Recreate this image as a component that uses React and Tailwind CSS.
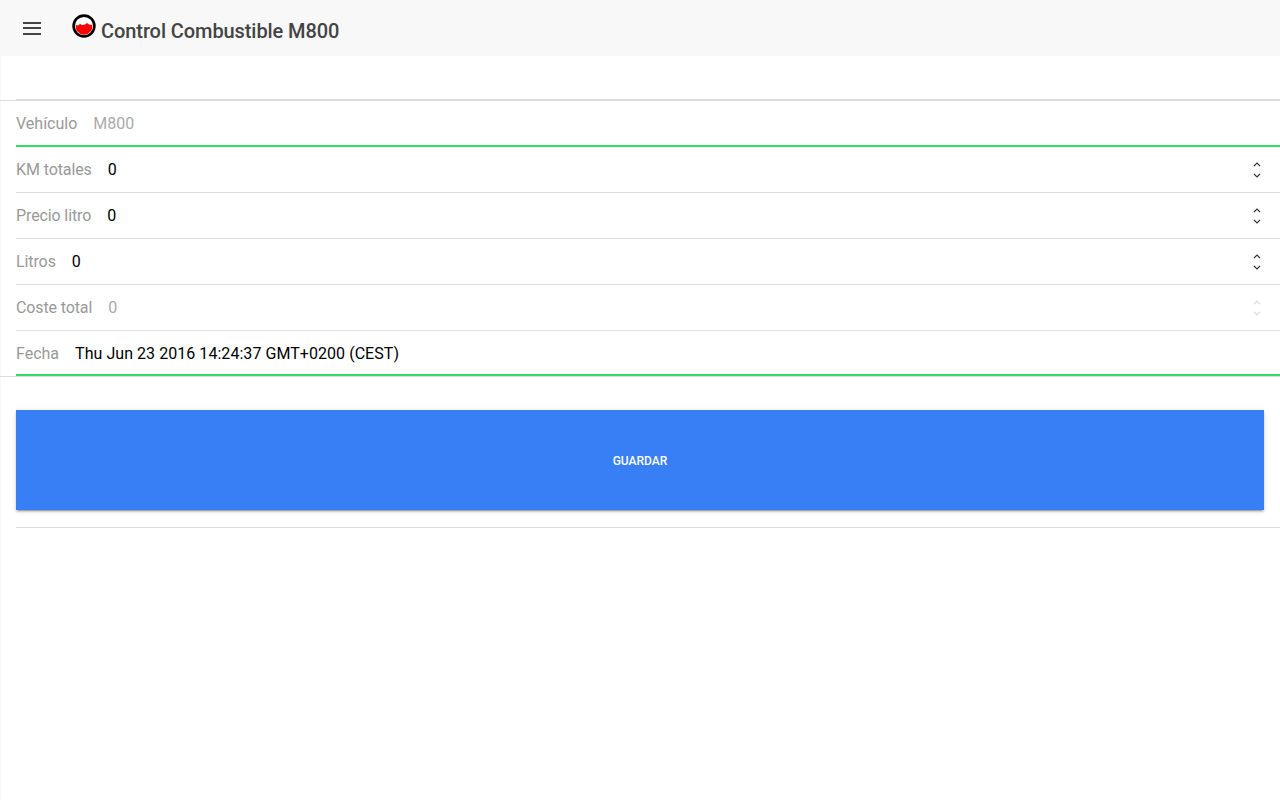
const rows = [
  { label: "KM totales", value: "0", labelClass: "tracking-[-0.1px]" },
  { label: "Precio litro", value: "0", labelClass: "tracking-[-0.12px]" },
  { label: "Litros", value: "0", labelClass: "tracking-[-0.1px]" },
  { label: "Coste total", value: "0", labelClass: "tracking-[-0.12px]", disabled: true },
];

function Spinner({ disabled }) {
  return (
    <svg width="8" height="16" viewBox="0 0 8 16" fill="none" className={disabled ? "opacity-15" : "opacity-90"}>
      <path d="M1 4 4 1l3 3M1 12l3 3 3-3" stroke="#222" strokeWidth="1.2" />
    </svg>
  );
}

function Logo() {
  return (
    <svg width="24" height="24" viewBox="0 0 24 24" className="mb-[4px]">
      <circle cx="12" cy="12" r="10.4" fill="#fff" stroke="#000" strokeWidth="2.6" />
      <path d="M3.7 11 6 11.5 8 10l2 1 3-.5L15 9l2 1.5 3.3.5a8.4 8.4 0 1 1-16.6 0z" fill="#f00" />
    </svg>
  );
}

function Row({ label, value, labelClass, disabled }) {
  return (
    <div className="ml-[16px] flex h-[46px] items-center border-b border-[#dddddd] pr-[19px] text-[16px]">
      <span className={`mr-[16px] text-[#999999] ${labelClass}`}>{label}</span>
      <span className={`flex-1 ${disabled ? "text-[#aaaaaa]" : "text-black"}`}>{value}</span>
      <Spinner disabled={disabled} />
    </div>
  );
}

export default function App() {
  return (
    <div className="relative min-h-[800px] border-l border-[#f7f7f7] bg-white font-['Roboto',sans-serif]">
      {/* Toolbar */}
      <div className="-ml-px flex h-14 items-center bg-[#f8f8f8]">
        <button className="ml-[23px] flex h-5 w-5 flex-col justify-center gap-[3.5px]">
          <span className="h-[2px] w-[18px] bg-[#444444]" />
          <span className="h-[2px] w-[18px] bg-[#444444]" />
          <span className="h-[2px] w-[18px] bg-[#444444]" />
        </button>
        <div className="ml-[29px] flex items-center">
          <Logo />
          <h1 className="ml-[5px] mt-[5px] text-[20px] font-medium tracking-[-0.08px] text-[#444444]">
            Control Combustible M800
          </h1>
        </div>
      </div>

      {/* Form */}
      <div className="-ml-px mt-[43px]">
        <div className="ml-[16px] border-t border-[#dddddd]" />
        <div className="border-t border-[#dddddd]" />
        <div className="ml-[16px] flex h-[46px] items-center border-b-2 border-[#32db64] pt-[2px] text-[16px]">
          <span className="mr-[16px] text-[#999999]">Vehículo</span>
          <span className="text-[#aaaaaa]">M800</span>
        </div>
        {rows.map((r) => (
          <Row key={r.label} {...r} />
        ))}
        <div className="border-b border-[#dddddd]">
          <div className="ml-[16px] flex h-[45px] items-center border-b-2 border-[#32db64] pt-[2px] text-[16px]">
            <span className="mr-[16px] text-[#999999]">Fecha</span>
            <span className="tracking-[0.05px] text-black">Thu Jun 23 2016 14:24:37 GMT+0200 (CEST)</span>
          </div>
        </div>

        <div className="mx-[16px] mt-[33px]">
          <button className="block h-[100px] w-full bg-[#387ef5] pt-[2px] text-[12px] font-medium text-white shadow-[0_2px_2px_0_rgba(0,0,0,0.14),0_3px_1px_-2px_rgba(0,0,0,0.2),0_1px_5px_0_rgba(0,0,0,0.12)]">
            GUARDAR
          </button>
        </div>
        <div className="ml-[16px] mt-[17px] border-t border-[#dddddd]" />
      </div>
    </div>
  );
}
